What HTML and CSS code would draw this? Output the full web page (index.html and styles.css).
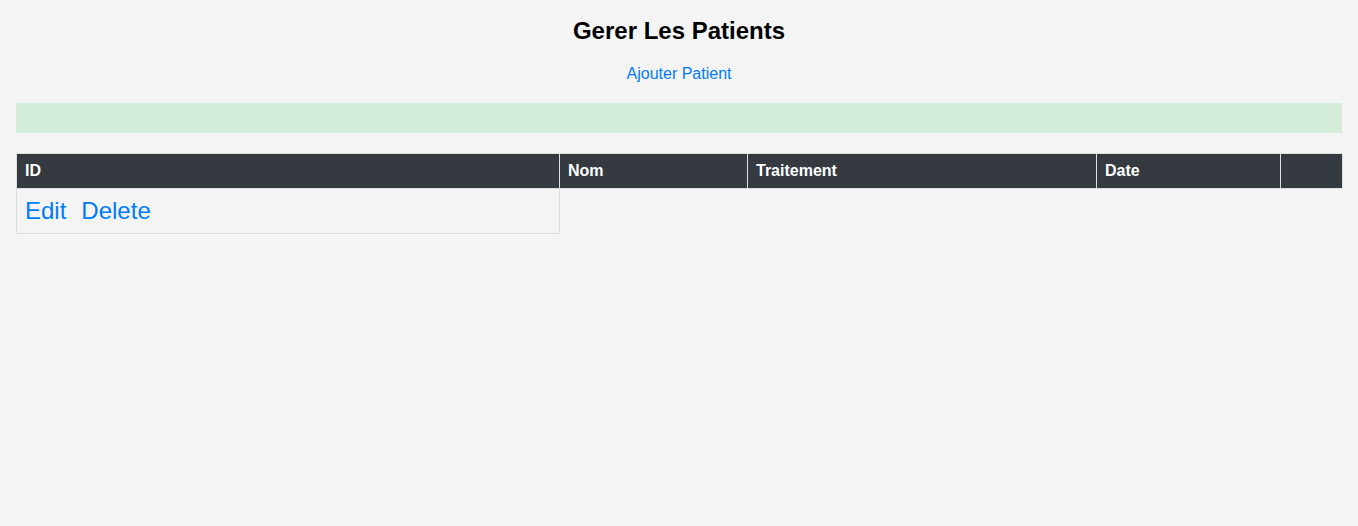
FILE: index.html
```html
<!DOCTYPE html>
<html lang="fr">
<head>
<meta charset="utf-8">
<title>Gerer Les Patients</title>
<link rel="stylesheet" href="styles.css">
</head>
<body>
<div class="page">
  <h2 class="title">Gerer Les Patients</h2>
  <div class="actions"><a href="#" class="link">Ajouter Patient</a></div>
  <div class="alert"></div>
  <table class="grid">
    <thead>
      <tr>
        <th class="c-id">ID</th>
        <th class="c-nom">Nom</th>
        <th class="c-trt">Traitement</th>
        <th class="c-date">Date</th>
        <th class="c-act"></th>
      </tr>
    </thead>
    <tbody>
      <tr>
        <td class="row-actions"><a href="#" class="big-link">Edit</a><a href="#" class="big-link">Delete</a></td>
      </tr>
    </tbody>
  </table>
</div>
</body>
</html>
```
FILE: styles.css
```css
html, body {
  margin: 0;
  padding: 0;
  background: #f4f4f4;
}
body {
  font-family: "Liberation Sans", Arial, sans-serif;
  color: #000;
}
.page {
  padding: 17px 16px;
}
.title {
  margin: 0 0 20px;
  font-size: 24px;
  line-height: 28px;
  font-weight: bold;
  text-align: center;
}
.actions {
  text-align: center;
  font-size: 16px;
  line-height: 18px;
  margin-bottom: 20px;
}
.link, .big-link {
  color: #007bff;
  text-decoration: none;
}
.alert {
  height: 30px;
  background: #d4edda;
  margin-bottom: 20px;
}
.grid {
  width: 1326px;
  border-collapse: collapse;
  table-layout: fixed;
}
.grid th {
  box-sizing: border-box;
  background: #343a40;
  color: #fff;
  font-size: 16px;
  line-height: 18px;
  font-weight: bold;
  text-align: left;
  padding: 8px;
  border: 1px solid #dddddd;
}
.c-id { width: 543px; }
.c-nom { width: 188px; }
.c-trt { width: 349px; }
.c-date { width: 184px; }
.c-act { width: 62px; }
.grid td {
  border: 1px solid #dddddd;
  padding: 8px;
  font-size: 24px;
  line-height: 28px;
}
.big-link {
  margin-right: 15px;
}
```
